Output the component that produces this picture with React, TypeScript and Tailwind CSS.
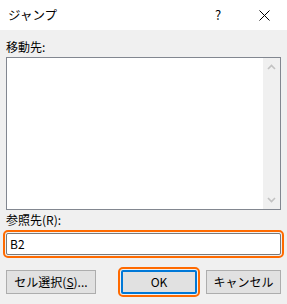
import React from 'react'

const FONT = { fontFamily: '"Noto Sans CJK JP", "Noto Sans", sans-serif' }

function Chevron({ up }: { up?: boolean }) {
  return (
    <svg width="9" height="6" viewBox="0 0 9 6">
      <path
        d={up ? 'M1 5 L4.5 1.5 L8 5' : 'M1 1 L4.5 4.5 L8 1'}
        fill="none"
        stroke="#c2c2c2"
        strokeWidth="1.6"
      />
    </svg>
  )
}

export default function App() {
  return (
    <div className="w-[287px] h-[304px] bg-[#f0f0f0] text-black text-[12px] flex flex-col" style={FONT}>
      {/* Title bar */}
      <div className="h-[30px] bg-white flex items-center">
        <div className="flex-1 pl-[8px] leading-none text-[12.5px]">ジャンプ</div>
        <div className="w-[46px] h-full flex items-center justify-center text-[13px]">?</div>
        <div className="w-[46px] h-full flex items-center justify-center">
          <svg width="11" height="11" viewBox="0 0 11 11">
            <path d="M0.5 0.5 L10.5 10.5 M10.5 0.5 L0.5 10.5" stroke="#000" strokeWidth="1" />
          </svg>
        </div>
      </div>

      <div className="px-[6px] flex flex-col">
        <div className="mt-[7px] h-[20px] leading-[20px]">移動先:</div>

        {/* List box */}
        <div className="h-[153px] border border-[#828790] bg-white flex">
          <div className="flex-1" />
          <div className="w-[17px] bg-[#f0f0f0] flex flex-col items-center justify-between py-[6px]">
            <Chevron up />
            <Chevron />
          </div>
        </div>

        <div className="h-[20px] leading-[20px]">参照先(R):</div>

        {/* Reference input */}
        <div className="mt-[3px] h-[22px] border border-[#7a7a7a] bg-white rounded-[2px] outline-2 outline-[#ff6a00] outline-offset-1 flex items-center px-[3px]">
          B2
        </div>

        {/* Buttons */}
        <div className="mt-[15px] flex h-[24px]">
          <div className="w-[90px] border border-[#adadad] bg-[#e1e1e1] flex items-center justify-center">
            セル選択(<span className="underline">S</span>)...
          </div>
          <div className="ml-[25px] w-[76px] border-2 border-[#0078d7] bg-[#e1e1e1] rounded-[2px] outline-2 outline-[#ff6a00] outline-offset-1 flex items-center justify-center">
            OK
          </div>
          <div className="ml-[9px] w-[75px] border border-[#adadad] bg-[#e1e1e1] flex items-center justify-center">
            キャンセル
          </div>
        </div>
      </div>
    </div>
  )
}
